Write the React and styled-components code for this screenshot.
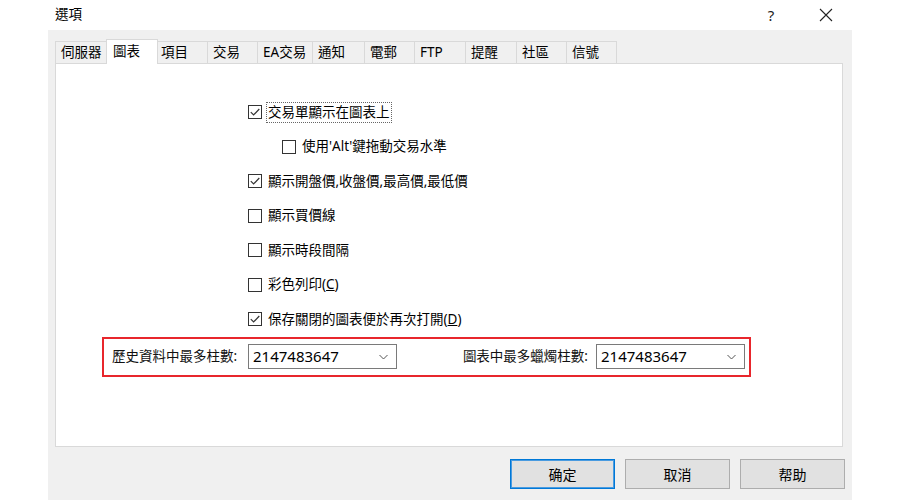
import React from 'react';
import styled, { createGlobalStyle } from 'styled-components';

const GlobalStyle = createGlobalStyle`
    html, body {
        margin: 0;
        padding: 0;
        background: #ffffff;
    }
    body {
        font-family: 'Noto Sans', 'Noto Sans CJK TC', sans-serif;
        color: #000;
    }
`;

const StyledWindow = styled.div`
    width: 900px;
    height: 500px;
    display: flex;
    flex-direction: column;
    overflow: hidden;
    background: #ffffff;
`;

const StyledTitleBar = styled.div`
    height: 30px;
    flex: none;
    display: flex;
    align-items: center;
    padding-left: 55px;
    font-size: 13.5px;
    & .title {
        flex: 1;
        line-height: 1;
    }
    & .help {
        width: 30px;
        text-align: center;
        font-size: 15px;
        color: #222;
        margin-right: 25px;
    }
    & .close {
        width: 30px;
        display: flex;
        justify-content: center;
        margin-right: 59px;
    }
`;

const StyledDialog = styled.div`
    margin: 0 48px;
    flex: 1;
    background: #f0f0f0;
    padding: 9px 9px 0 7px;
    display: flex;
    flex-direction: column;
`;

const StyledTabStrip = styled.div`
    height: 24px;
    display: flex;
    align-items: flex-end;
`;

const StyledTab = styled.div`
    box-sizing: border-box;
    width: ${props => props.w + (props.active ? 4 : 0)}px;
    height: ${props => (props.active ? 25 : 22)}px;
    margin: 0 ${props => (props.active ? -2 : 0)}px
        ${props => (props.active ? -1 : 0)}px;
    padding-left: ${props => (props.active ? 6 : 5)}px;
    padding-top: ${props => (props.active ? 3 : 2)}px;
    border: 1px solid #d9d9d9;
    border-left-width: ${props => (props.first || props.active ? 1 : 0)}px;
    border-bottom: none;
    background: ${props => (props.active ? '#ffffff' : '#f0f0f0')};
    font-size: 13.5px;
    line-height: 16px;
    white-space: nowrap;
    position: relative;
    z-index: ${props => (props.active ? 2 : 1)};
`;

const StyledPage = styled.div`
    box-sizing: border-box;
    height: 384px;
    background: #ffffff;
    border: 1px solid #d9d9d9;
    padding: 31px 0 0 46px;
    position: relative;
    z-index: 1;
`;

const StyledChecks = styled.div`
    padding-left: 146px;
`;

const StyledCheckRow = styled.div`
    height: 34.5px;
    display: flex;
    align-items: center;
    padding-left: ${props => (props.indent ? 34 : 0)}px;
    font-size: 13.5px;
    & .label {
        margin-left: 4px;
        padding: 1px 1px;
        line-height: 17px;
        border: 1px dotted ${props => (props.focused ? '#666' : 'transparent')};
    }
`;

const StyledBox = styled.div`
    box-sizing: border-box;
    width: 14px;
    height: 14px;
    border: 1px solid #333;
    background: #fff;
    display: flex;
    align-items: center;
    justify-content: center;
    flex: none;
`;

const StyledLimits = styled.div`
    box-sizing: border-box;
    width: 649px;
    height: 40px;
    border: 2px solid #e8262c;
    display: flex;
    align-items: center;
    padding: 0 4px 0 8px;
`;

const StyledField = styled.div`
    display: flex;
    align-items: center;
    flex: ${props => (props.grow ? 1 : 'none')};
    justify-content: ${props => (props.grow ? 'flex-end' : 'flex-start')};
    & .label {
        width: ${props => (props.grow ? 'auto' : '136px')};
        margin-right: ${props => (props.grow ? 8 : 0)}px;
        font-size: 13.5px;
        line-height: 17px;
        color: #111;
    }
`;

const StyledCombo = styled.div`
    box-sizing: border-box;
    width: 149px;
    height: 25px;
    border: 1px solid #7a7a7a;
    background: #fff;
    display: flex;
    align-items: center;
    padding: 0 8px 0 4px;
    font-family: 'Noto Sans', sans-serif;
    font-size: 15px;
    & span {
        flex: 1;
        line-height: 1;
    }
`;

const StyledButtons = styled.div`
    display: flex;
    justify-content: flex-end;
    gap: 10px;
    margin: 12px -2px 0 0;
`;

const StyledButton = styled.div`
    box-sizing: border-box;
    width: 105px;
    height: 30px;
    background: #e1e1e1;
    border: 1px solid ${props => (props.primary ? '#0078d7' : '#adadad')};
    box-shadow: ${props => (props.primary ? 'inset 0 0 0 1px #4a9be0' : 'none')};
    display: flex;
    align-items: center;
    justify-content: center;
    font-family: 'Noto Sans CJK SC', sans-serif;
    font-size: 14px;
`;

const tabs = [
    ['伺服器', 53],
    ['圖表', 48],
    ['項目', 52],
    ['交易', 50],
    ['EA交易', 55],
    ['通知', 52],
    ['電郵', 50],
    ['FTP', 51],
    ['提醒', 51],
    ['社區', 50],
    ['信號', 50],
];

const checks = [
    { label: '交易單顯示在圖表上', checked: true, focused: true },
    { label: "使用'Alt'鍵拖動交易水準", indent: true },
    { label: '顯示開盤價,收盤價,最高價,最低價', checked: true },
    { label: '顯示買價線' },
    { label: '顯示時段間隔' },
    { label: ['彩色列印(', <u key='c'>C</u>, ')'] },
    { label: ['保存關閉的圖表便於再次打開(', <u key='d'>D</u>, ')'], checked: true },
];

const CheckMark = () => (
    <svg width='12' height='12' viewBox='0 0 12 12'>
        <path d='M1.8 6.2 L4.6 9 L10.3 3' fill='none' stroke='#333' strokeWidth='1.2' />
    </svg>
);

const Chevron = () => (
    <svg width='9' height='6' viewBox='0 0 9 6'>
        <path d='M0.5 1 L4.5 5 L8.5 1' fill='none' stroke='#555' strokeWidth='1' />
    </svg>
);

export default function App() {
    return (
        <StyledWindow>
            <GlobalStyle />
            <StyledTitleBar>
                <div className='title'>選項</div>
                <div className='help'>?</div>
                <div className='close'>
                    <svg width='14' height='14' viewBox='0 0 14 14'>
                        <path d='M1 1 L13 13 M13 1 L1 13' stroke='#222' strokeWidth='1.1' />
                    </svg>
                </div>
            </StyledTitleBar>
            <StyledDialog>
                <StyledTabStrip>
                    {tabs.map(([name, w], i) => (
                        <StyledTab key={name} w={w} first={i === 0} active={i === 1}>
                            {name}
                        </StyledTab>
                    ))}
                </StyledTabStrip>
                <StyledPage>
                    <StyledChecks>
                        {checks.map((c, i) => (
                            <StyledCheckRow key={i} indent={c.indent} focused={c.focused}>
                                <StyledBox>{c.checked && <CheckMark />}</StyledBox>
                                <span className='label'>{c.label}</span>
                            </StyledCheckRow>
                        ))}
                    </StyledChecks>
                    <StyledLimits>
                        <StyledField>
                            <span className='label'>歷史資料中最多柱數:</span>
                            <StyledCombo>
                                <span>2147483647</span>
                                <Chevron />
                            </StyledCombo>
                        </StyledField>
                        <StyledField grow>
                            <span className='label'>圖表中最多蠟燭柱數:</span>
                            <StyledCombo>
                                <span>2147483647</span>
                                <Chevron />
                            </StyledCombo>
                        </StyledField>
                    </StyledLimits>
                </StyledPage>
                <StyledButtons>
                    <StyledButton primary>确定</StyledButton>
                    <StyledButton>取消</StyledButton>
                    <StyledButton>帮助</StyledButton>
                </StyledButtons>
            </StyledDialog>
        </StyledWindow>
    );
}
